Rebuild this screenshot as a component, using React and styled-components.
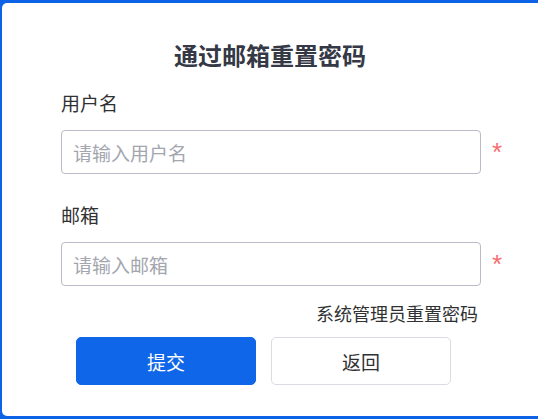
import React from "react";
import styled, { createGlobalStyle } from "styled-components";

const GlobalStyle = createGlobalStyle`
  html, body {
    margin: 0;
    padding: 0;
    background: #0e62e5;
    font-family: "Noto Sans CJK SC", "Liberation Sans", sans-serif;
  }
  * {
    box-sizing: border-box;
  }
`;

const Panel = styled.div`
  margin: 3px 0 3px 2px;
  height: 413px;
  background: #ffffff;
  border-radius: 5px 0 0 5px;
  padding: 36px 0 0 59px;
  display: flex;
  flex-direction: column;
`;

const Title = styled.h2`
  margin: 0 0 0 -59px;
  font-size: 24px;
  line-height: 32px;
  font-weight: 700;
  color: #353845;
  text-align: center;
`;

const Field = styled.div`
  display: flex;
  flex-direction: column;
  margin-top: ${({ $top }) => $top}px;
`;

const Label = styled.label`
  font-size: 19px;
  line-height: 24px;
  color: #303133;
  margin-bottom: 15px;
`;

const InputRow = styled.div`
  display: flex;
  align-items: center;
  gap: 11px;
`;

const Input = styled.input`
  width: 420px;
  height: 44px;
  border: 1px solid #b9bcc6;
  border-radius: 4px;
  padding: 0 11px;
  font-family: inherit;
  font-size: 19px;
  color: #303133;
  outline: none;
  &::placeholder {
    color: #a3a6ae;
  }
`;

const Required = styled.span`
  color: #f56c6c;
  font-family: "Liberation Sans", sans-serif;
  font-size: 26px;
  line-height: 26px;
  height: 20px;
  margin-top: -6px;
`;

const AdminLink = styled.a`
  align-self: flex-start;
  margin: 15px 0 0 255px;
  font-size: 18px;
  line-height: 24px;
  color: #303133;
  text-decoration: none;
  cursor: pointer;
`;

const Actions = styled.div`
  display: flex;
  gap: 15px;
  margin: 12px 0 0 15px;
`;

const Button = styled.button`
  width: 180px;
  height: 48px;
  border-radius: 5px;
  font-family: inherit;
  font-size: 19px;
  cursor: pointer;
  border: 1px solid ${({ $primary }) => ($primary ? "#0f66e9" : "#dadce3")};
  background: ${({ $primary }) => ($primary ? "#0f66e9" : "#ffffff")};
  color: ${({ $primary }) => ($primary ? "#ffffff" : "#303133")};
`;

export default function App() {
  return (
    <>
      <GlobalStyle />
      <Panel>
        <Title>通过邮箱重置密码</Title>
        <Field $top={20}>
          <Label>用户名</Label>
          <InputRow>
            <Input placeholder="请输入用户名" />
            <Required>*</Required>
          </InputRow>
        </Field>
        <Field $top={29}>
          <Label>邮箱</Label>
          <InputRow>
            <Input placeholder="请输入邮箱" />
            <Required>*</Required>
          </InputRow>
        </Field>
        <AdminLink>系统管理员重置密码</AdminLink>
        <Actions>
          <Button $primary>提交</Button>
          <Button>返回</Button>
        </Actions>
      </Panel>
    </>
  );
}
